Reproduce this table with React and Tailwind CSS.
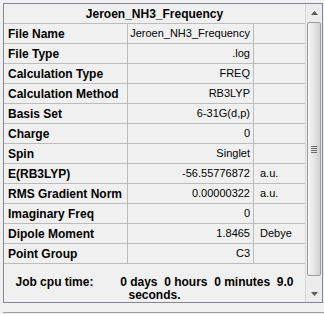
import React from "react";

const rows = [
  ["File Name", "Jeroen_NH3_Frequency", ""],
  ["File Type", ".log", ""],
  ["Calculation Type", "FREQ", ""],
  ["Calculation Method", "RB3LYP", ""],
  ["Basis Set", "6-31G(d,p)", ""],
  ["Charge", "0", ""],
  ["Spin", "Singlet", ""],
  ["E(RB3LYP)", "-56.55776872", "a.u."],
  ["RMS Gradient Norm", "0.00000322", "a.u."],
  ["Imaginary Freq", "0", ""],
  ["Dipole Moment", "1.8465", "Debye"],
  ["Point Group", "C3", ""],
];

function ScrollBar() {
  return (
    <div className="w-[17px] flex flex-col bg-[#ececec] border-l border-[#d8d8d8]">
      {/* up arrow */}
      <div className="h-[17px] flex items-center justify-center">
        <svg width="7" height="4" viewBox="0 0 7 4">
          <path d="M3.5 0 L7 4 L0 4 Z" fill="#5a5a5a" />
        </svg>
      </div>
      <div className="flex-1 px-[1px] pt-[1px] pb-[9px] flex">
        {/* thumb */}
        <div className="flex-1 rounded-[2px] border border-[#9c9c9c] bg-gradient-to-r from-[#f4f4f4] via-[#e6e6e6] to-[#cfcfcf] flex items-center justify-center">
          <div className="flex flex-col gap-[1px]">
            <div className="w-[6px] h-[1px] bg-[#6a6a6a]" />
            <div className="w-[6px] h-[1px] bg-[#6a6a6a]" />
            <div className="w-[6px] h-[1px] bg-[#6a6a6a]" />
            <div className="w-[6px] h-[1px] bg-[#6a6a6a]" />
          </div>
        </div>
      </div>
      {/* down arrow */}
      <div className="h-[17px] flex items-center justify-center">
        <svg width="7" height="4" viewBox="0 0 7 4">
          <path d="M0 0 L7 0 L3.5 4 Z" fill="#5a5a5a" />
        </svg>
      </div>
    </div>
  );
}

export default function App() {
  return (
    <div
      className="w-[324px] h-[314px] bg-[#f0f0f0] text-black pt-[3px] pl-[3px]"
      style={{ fontFamily: '"Liberation Sans", Arial, sans-serif' }}
    >
      <div className="w-[320px] h-[300px] border border-[#828790] flex">
        <div className="w-[301px] flex flex-col">
          <div className="h-[20px] border-b border-[#bcbcbc] flex items-center justify-center font-bold text-[12px]">
            Jeroen_NH3_Frequency
          </div>
          {rows.map(([label, value, unit]) => (
            <div key={label} className="h-[20px] border-b border-[#bcbcbc] flex">
              <div className="w-[124px] border-r border-[#bcbcbc] flex items-center pl-[4px] font-bold text-[12px] whitespace-nowrap">
                {label}
              </div>
              <div className="w-[126px] border-r border-[#bcbcbc] flex items-center justify-end pr-[3px] text-[11px] whitespace-nowrap">
                {value}
              </div>
              <div className="flex-1 flex items-center pl-[6px] text-[11px]">{unit}</div>
            </div>
          ))}
          <div className="flex-1 px-[4px] pt-[12px]">
            <p className="text-center font-bold text-[12px] leading-[13px] whitespace-pre-wrap">
              {"Job cpu time:        0 days  0 hours  0 minutes  9.0 seconds."}
            </p>
          </div>
        </div>
        <ScrollBar />
      </div>
      <div className="mt-[9px] h-[1px] w-[321px] bg-[#a0a0a0]" />
    </div>
  );
}
